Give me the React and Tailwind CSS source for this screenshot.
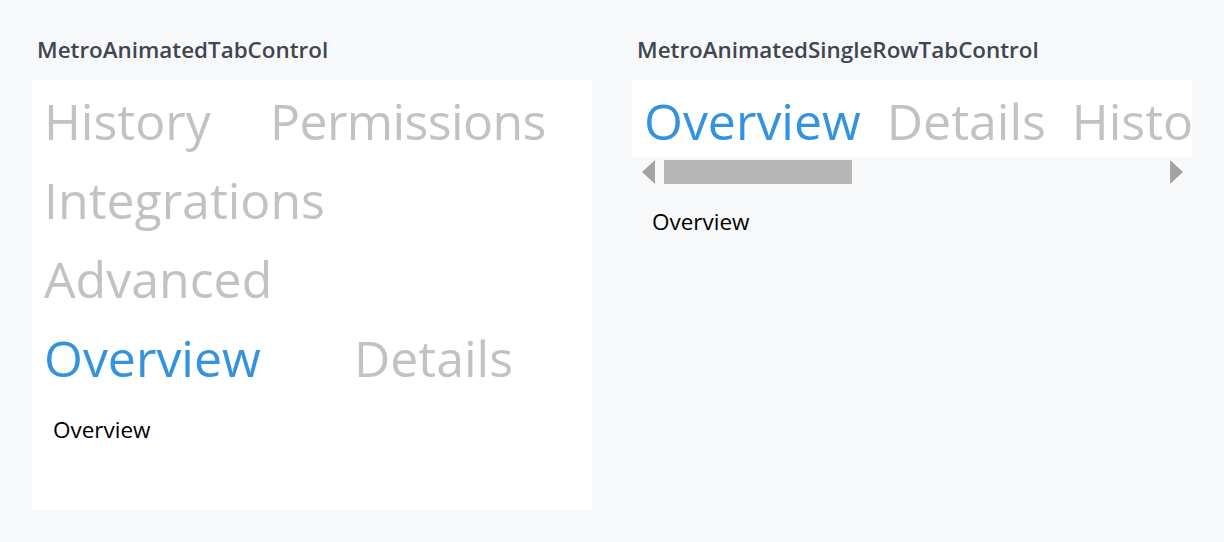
import React from 'react';

const font = { fontFamily: '"Open Sans", "Noto Sans", sans-serif' };

function Arrow({ dir }) {
  // scroll button triangle
  return (
    <svg width="13" height="24" viewBox="0 0 13 24" className="shrink-0">
      {dir === 'left' ? (
        <polygon points="13,0 13,24 0,12" fill="#a3a3a3" />
      ) : (
        <polygon points="0,0 0,24 13,12" fill="#a3a3a3" />
      )}
    </svg>
  );
}

function MultiRowTabs() {
  return (
    <div className="w-[560px] h-[430px] bg-white flex flex-col">
      <div className="flex h-[79px] pl-[12px] text-[50px] leading-[79px] pt-[2px] text-[#c2c2c2]">
        <span className="w-[226px]">History</span>
        <span className="tracking-[-0.6px]">Permissions</span>
      </div>
      <div className="flex h-[79px] pl-[12px] text-[50px] leading-[79px] pt-[2px] text-[#c2c2c2]">
        <span>Integrations</span>
      </div>
      <div className="flex h-[79px] pl-[12px] text-[50px] leading-[79px] pt-[2px] text-[#c2c2c2]">
        <span>Advanced</span>
      </div>
      <div className="flex h-[79px] pl-[12px] text-[50px] leading-[79px] pt-[2px]">
        <span className="w-[310px] text-[#3493e0]">Overview</span>
        <span className="text-[#c2c2c2]">Details</span>
      </div>
      <div className="pl-[21px] pt-[19px] text-[22.5px] leading-[30px] text-black">Overview</div>
    </div>
  );
}

function SingleRowTabs() {
  return (
    <div className="w-[560px] flex flex-col">
      <div className="h-[77px] bg-white overflow-hidden">
        <div className="flex gap-[26px] pl-[12px] pt-[2px] text-[50px] leading-[79px] whitespace-nowrap">
          <span className="text-[#3493e0]">Overview</span>
          <span className="text-[#c2c2c2]">Details</span>
          <span className="text-[#c2c2c2]">History</span>
          <span className="text-[#c2c2c2]">Permissions</span>
        </div>
      </div>
      <div className="flex items-center h-[24px] mt-[3px] pl-[10px] pr-[9px]">
        <Arrow dir="left" />
        <div className="ml-[9px] w-[188px] h-[24px] bg-[#b6b6b6]" />
        <div className="flex-1" />
        <Arrow dir="right" />
      </div>
      <div className="pl-[20px] pt-[23px] text-[22.5px] leading-[30px] text-black">Overview</div>
    </div>
  );
}

export default function App() {
  return (
    <div className="w-[1224px] h-[542px] bg-[#f7f8fa] px-8 pt-5 flex gap-10" style={font}>
      <div className="flex flex-col">
        <div className="h-[60px] flex items-center pl-[5px] text-[22.4px] font-semibold text-[#40464f]">
          MetroAnimatedTabControl
        </div>
        <MultiRowTabs />
      </div>
      <div className="flex flex-col">
        <div className="h-[60px] flex items-center pl-[5px] text-[22.4px] font-semibold text-[#40464f]">
          MetroAnimatedSingleRowTabControl
        </div>
        <SingleRowTabs />
      </div>
    </div>
  );
}
